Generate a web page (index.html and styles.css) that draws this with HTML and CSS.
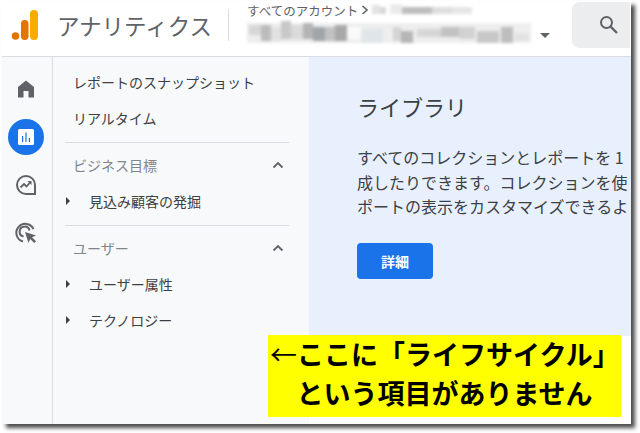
FILE: index.html
```html
<!DOCTYPE html>
<html lang="ja">

<head>
    <meta charset="UTF-8">
    <meta name="viewport" content="width=device-width, initial-scale=1.0">
    <title>アナリティクス</title>
    <link rel="stylesheet" href="styles.css">
</head>

<body>

    <div class="shot">

        <header class="topbar">
            <svg class="logo" width="30" height="32" viewBox="0 0 30 32">
                <rect x="19" y="1" width="8" height="30" rx="4" fill="#f9ab00"/>
                <rect x="10" y="11" width="7.5" height="20" rx="3.7" fill="#e37400"/>
                <circle cx="4.5" cy="27" r="3.8" fill="#e37400"/>
            </svg>
            <div class="product">アナリティクス</div>
            <div class="account">
                <div class="crumb">
                    <span>すべてのアカウント</span>
                    <svg width="8" height="10" viewBox="0 0 8 10"><path d="M1.5 1l4.5 4-4.5 4" fill="none" stroke="#5f6368" stroke-width="1.6"/></svg>
                    <!-- mosaic: blurred account name -->
                    <svg class="mosaic" width="102" height="12" viewBox="0 0 102 12">
                        <rect x="0" y="1" width="8" height="9" fill="#e3e3e3"/>
                        <rect x="8" y="3" width="6" height="7" fill="#d8d8d8"/>
                        <rect x="18" y="0" width="12" height="10" fill="#ebebeb"/>
                        <rect x="30" y="3" width="30" height="7" fill="#bdbdbd"/>
                        <rect x="60" y="3" width="20" height="7" fill="#dedede"/>
                        <rect x="80" y="3" width="20" height="7" fill="#e6e6e6"/>
                    </svg>
                </div>
                <div class="property">
                    <svg class="mosaic" width="284" height="24" viewBox="0 0 284 24">
                        <rect x="0" y="2" width="284" height="20" fill="#eeeeee"/>
                        <rect x="2" y="4" width="12" height="10" fill="#d6d6d6"/>
                        <rect x="14" y="4" width="10" height="16" fill="#bcbcbc"/>
                        <rect x="24" y="6" width="10" height="14" fill="#e2e2e2"/>
                        <rect x="34" y="0" width="10" height="18" fill="#c8c8c8"/>
                        <rect x="44" y="4" width="12" height="14" fill="#dadada"/>
                        <rect x="56" y="2" width="10" height="16" fill="#b4b4b4"/>
                        <rect x="66" y="6" width="12" height="14" fill="#9fa5a9"/>
                        <rect x="78" y="6" width="10" height="14" fill="#c2c2c2"/>
                        <rect x="88" y="4" width="12" height="16" fill="#a8a8a8"/>
                        <rect x="100" y="6" width="14" height="12" fill="#fafafa"/>
                        <rect x="114" y="8" width="22" height="14" fill="#dfe6ea"/>
                        <rect x="146" y="6" width="8" height="14" fill="#d4d4d4"/>
                        <rect x="154" y="10" width="12" height="12" fill="#b6b6b6"/>
                        <rect x="170" y="8" width="24" height="8" fill="#d6d6d6"/>
                        <rect x="194" y="6" width="18" height="10" fill="#c2c2c2"/>
                        <rect x="212" y="6" width="16" height="12" fill="#d2d2d2"/>
                        <rect x="230" y="10" width="22" height="12" fill="#c8c8c8"/>
                        <rect x="254" y="6" width="12" height="16" fill="#bebebe"/>
                        <rect x="268" y="12" width="14" height="8" fill="#e3e3e3"/>
                    </svg>
                    <span class="caret"></span>
                </div>
            </div>
            <div class="search">
                <svg width="24" height="24" viewBox="0 0 24 24">
                    <circle cx="9.500" cy="9.500" r="5.500" fill="none" stroke="#5f6368" stroke-width="2"/>
                    <path d="M13.500 13.500l6.500 6.500" fill="none" stroke="#5f6368" stroke-width="2.400"/>
                </svg>
            </div>
        </header>

        <div class="layout">

            <!-- Icon rail -->
            <nav class="rail">
                <svg class="rail-icon" width="24" height="24" viewBox="0 0 24 24"><path d="M12 3.500L4 10v10.500h5.500V14h5v6.500H20V10z" fill="#5f6368"/></svg>
                <div class="rail-active">
                    <svg width="20" height="20" viewBox="0 0 20 20">
                        <rect x="2" y="2" width="16" height="16" rx="1.500" fill="#fff"/>
                        <path d="M6 9h1.200v6H6zM9.400 5.500h1.200V15H9.400zM12.800 11H14v4h-1.200z" fill="#1a73e8"/>
                    </svg>
                </div>
                <svg class="rail-icon" width="24" height="24" viewBox="0 0 24 24">
                    <path d="M21 21h-9a9 9 0 1 1 9-9z" fill="none" stroke="#5f6368" stroke-width="2"/>
                    <path d="M6.500 14.500l3.500-3.500 2.500 2.500 4-4.500" fill="none" stroke="#5f6368" stroke-width="1.800"/>
                    <path d="M13.500 8h4v4z" fill="#5f6368"/>
                </svg>
                <svg class="rail-icon" width="24" height="24" viewBox="0 0 24 24">
                    <path d="M19.500 8A9 9 0 1 0 9 20.500" fill="none" stroke="#5f6368" stroke-width="2"/>
                    <path d="M15.500 9.500A5 5 0 1 0 9.500 15.500" fill="none" stroke="#5f6368" stroke-width="2"/>
                    <path d="M11 11l11 3.500-4 1.800 4 4-1.800 1.800-4-4-1.700 4z" fill="#5f6368"/>
                </svg>
            </nav>

            <!-- Report list -->
            <aside class="side">
                <a class="side-link">レポートのスナップショット</a>
                <a class="side-link">リアルタイム</a>
                <div class="side-group">
                    <div class="group-title">
                        <span>ビジネス目標</span>
                        <svg width="12" height="8" viewBox="0 0 12 8"><path d="M1.500 6.500L6 2l4.500 4.500" fill="none" stroke="#5f6368" stroke-width="1.800"/></svg>
                    </div>
                    <a class="side-item">見込み顧客の発掘</a>
                </div>
                <div class="side-group">
                    <div class="group-title">
                        <span>ユーザー</span>
                        <svg width="12" height="8" viewBox="0 0 12 8"><path d="M1.500 6.500L6 2l4.500 4.500" fill="none" stroke="#5f6368" stroke-width="1.800"/></svg>
                    </div>
                    <a class="side-item">ユーザー属性</a>
                    <a class="side-item">テクノロジー</a>
                </div>
            </aside>

            <main class="main">
                <section class="library">
                    <h1>ライブラリ</h1>
                    <p>すべてのコレクションとレポートを 1</p>
                    <p>成したりできます。コレクションを使</p>
                    <p>ポートの表示をカスタマイズできるよ</p>
                    <a class="btn">詳細</a>
                </section>
            </main>
        </div>
    </div>

    <!-- Annotation pasted over the screenshot -->
    <div class="note">
        <div class="note-first"><span class="note-arrow">←</span>ここに「ライフサイクル」</div>
        <div class="note-second">という項目がありません</div>
    </div>

</body>
</html>
```

FILE: styles.css
```css
* {
    box-sizing: border-box;
    margin: 0;
    padding: 0;
}

body {
    background: #fff;
    font-family: "Noto Sans CJK JP", "Noto Sans", sans-serif;
    color: #3c4043;
    width: 640px;
    height: 433px;
    padding: 1px 0 0 2px;
    overflow: hidden;
    position: relative;
}

.shot {
    width: 629px;
    height: 423px;
    background: #fff;
    box-shadow: 4px 4px 4px 0 rgba(0, 0, 0, 0.7);
    display: flex;
    flex-direction: column;
    overflow: hidden;
}

/* Header */
.topbar {
    height: 56px;
    flex: none;
    display: flex;
    align-items: flex-start;
    border-bottom: 1px solid #dadce0;
}

.logo {
    margin: 8px 0 0 9px;
    flex: none;
}

.product {
    font-size: 22.500px;
    line-height: 32px;
    color: #5f6368;
    width: 172px;
    margin: 8px 0 0 16px;
    height: 32px;
    flex: none;
    border-right: 1px solid #dadce0;
    white-space: nowrap;
}

.account {
    margin-left: 18px;
    width: 325px;
    flex: none;
}

.crumb {
    display: flex;
    align-items: center;
    gap: 3px;
    height: 18px;
    font-size: 12.500px;
    color: #5f6368;
}

.mosaic {
    filter: blur(1.800px);
    flex: none;
}

.property {
    display: flex;
    align-items: center;
    margin-top: 2px;
    gap: 9px;
}

.caret {
    width: 0;
    height: 0;
    border-left: 5px solid transparent;
    border-right: 5px solid transparent;
    border-top: 5px solid #5f6368;
    margin-top: 4px;
}

.search {
    width: 58px;
    height: 46px;
    margin-top: 1px;
    background: #ebedef;
    border-radius: 8px 0 0 8px;
    display: flex;
    align-items: center;
    justify-content: flex-end;
    padding-right: 9px;
    flex: none;
}

/* Layout */
.layout {
    flex: 1;
    display: flex;
    min-height: 0;
    background: #f8f9fa;
}

.rail {
    width: 51px;
    flex: none;
    border-right: 1px solid #dadce0;
    padding: 20px 3px 0 0;
    display: flex;
    flex-direction: column;
    align-items: center;
}

.rail-icon {
    flex: none;
}

.rail-active {
    width: 36px;
    height: 36px;
    margin: 18px 0;
    border-radius: 50%;
    background: #1a73e8;
    display: flex;
    align-items: center;
    justify-content: center;
}

.rail-active + .rail-icon {
    margin-bottom: 24px;
}

.side {
    width: 256px;
    flex: none;
    padding: 7px 20px 0 12px;
}

.side-link,
.group-title,
.side-item {
    display: flex;
    align-items: center;
    height: 36px;
    font-size: 14px;
    white-space: nowrap;
}

.side-link {
    padding-left: 8px;
}

.side-group {
    border-top: 1px solid #dadce0;
    padding: 4px 0 1px;
    margin-top: 5px;
}

.side-link + .side-group {
    margin-top: 6px;
}

.group-title {
    justify-content: space-between;
    padding: 0 5px 0 8px;
    color: #80868b;
}

.side-item {
    padding-left: 24px;
    position: relative;
}

.side-item::before {
    content: '';
    position: absolute;
    left: 1px;
    top: 14px;
    border-top: 4px solid transparent;
    border-bottom: 4px solid transparent;
    border-left: 4px solid #3c4043;
}

/* Main */
.main {
    flex: 1;
    min-width: 0;
    background: #fff;
}

.library {
    height: 279px;
    background: #e8f0fe;
    padding: 33px 0 0 48px;
    overflow: hidden;
}

.library h1 {
    font-size: 22px;
    font-weight: 400;
    line-height: 32px;
    margin-bottom: 23px;
    color: #3c4043;
}

.library p {
    font-size: 16px;
    line-height: 24.500px;
    white-space: nowrap;
}

.btn {
    display: flex;
    align-items: center;
    justify-content: center;
    width: 76px;
    height: 36px;
    margin-top: 24px;
    border-radius: 4px;
    background: #1a73e8;
    color: #fff;
    font-size: 14px;
    font-weight: 700;
}

/* Annotation */
.note {
    position: absolute;
    left: 268px;
    top: 335px;
    width: 353px;
    height: 82px;
    background: #ffff00;
    color: #000;
    font-size: 27px;
    font-weight: 700;
    line-height: 37px;
    white-space: nowrap;
    display: flex;
    flex-direction: column;
    gap: 2px;
}

.note-first {
    padding-left: 2px;
}

.note-arrow {
    font-weight: 400;
}

.note-second {
    text-align: center;
}
```
